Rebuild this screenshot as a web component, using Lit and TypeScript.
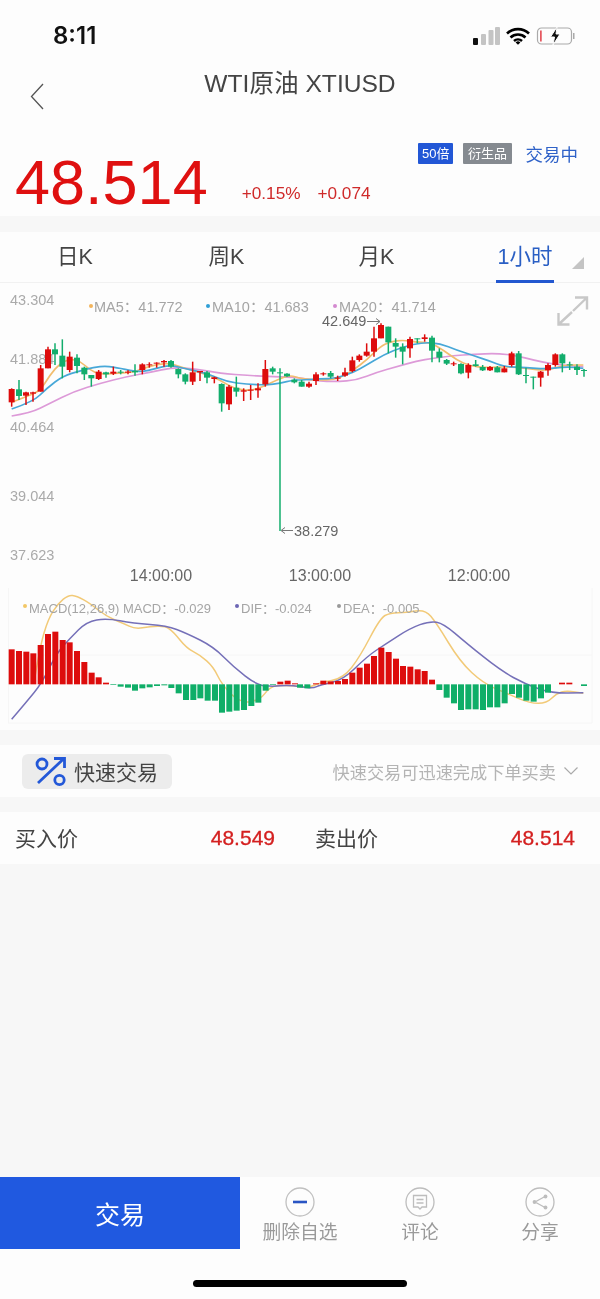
import { LitElement, css, html, svg } from 'lit';
import { customElement } from 'lit/decorators.js';

type Candle = [number, number, number, number, number, 'r' | 'g'];

// all chart data is in 3x units, read off the reference crops
const CANDLES: Candle[] = [
  [35, 310, 365, 312, 352, 'r'], [57, 285, 345, 313, 333, 'g'], [78, 320, 360, 322, 332, 'r'],
  [99, 320, 350, 322, 326, 'r'], [122, 240, 320, 250, 320, 'r'], [144, 185, 250, 193, 250, 'r'],
  [165, 175, 240, 193, 208, 'g'], [187, 163, 280, 212, 245, 'g'], [209, 200, 262, 215, 255, 'r'],
  [231, 208, 265, 218, 243, 'g'], [253, 245, 285, 248, 268, 'g'], [274, 270, 305, 270, 280, 'g'],
  [296, 255, 285, 260, 282, 'r'], [318, 260, 278, 262, 268, 'g'], [340, 245, 270, 260, 266, 'r'],
  [362, 255, 268, 260, 263, 'g'], [384, 256, 268, 260, 263, 'r'], [405, 238, 272, 258, 262, 'g'],
  [427, 235, 268, 238, 255, 'r'], [448, 232, 248, 238, 241, 'r'], [470, 232, 248, 233, 236, 'r'],
  [492, 225, 245, 228, 232, 'r'], [513, 225, 248, 228, 245, 'g'], [535, 250, 280, 252, 268, 'g'],
  [556, 265, 298, 268, 290, 'g'], [578, 230, 300, 262, 290, 'r'], [600, 258, 288, 258, 262, 'r'],
  [621, 258, 295, 262, 278, 'g'], [643, 275, 295, 277, 282, 'r'], [665, 295, 380, 297, 355, 'g'],
  [687, 300, 375, 305, 358, 'r'], [709, 275, 335, 308, 320, 'g'], [731, 310, 348, 316, 320, 'r'],
  [752, 300, 345, 314, 317, 'r'], [774, 295, 338, 310, 316, 'r'], [796, 225, 305, 252, 298, 'r'],
  [818, 245, 268, 250, 260, 'g'], [840, 250, 738, 262, 265, 'g'], [861, 265, 275, 266, 274, 'g'],
  [883, 280, 295, 284, 292, 'g'], [905, 285, 305, 290, 305, 'g'], [927, 290, 308, 296, 305, 'r'],
  [948, 262, 300, 268, 288, 'r'], [970, 262, 272, 265, 268, 'r'], [992, 258, 280, 264, 275, 'g'],
  [1013, 272, 288, 278, 281, 'r'], [1035, 248, 275, 262, 272, 'r'], [1057, 215, 262, 226, 258, 'r'],
  [1078, 208, 230, 212, 225, 'r'], [1100, 175, 215, 200, 212, 'r'], [1122, 125, 215, 160, 200, 'r'],
  [1143, 115, 160, 120, 160, 'r'], [1165, 125, 205, 125, 172, 'g'], [1187, 160, 218, 174, 185, 'g'],
  [1208, 175, 238, 185, 200, 'g'], [1230, 155, 218, 162, 190, 'r'], [1252, 160, 175, 160, 163, 'g'],
  [1274, 148, 170, 157, 162, 'r'], [1296, 152, 232, 158, 197, 'g'], [1318, 190, 232, 200, 218, 'g'],
  [1340, 222, 240, 225, 236, 'g'], [1361, 230, 243, 235, 238, 'r'], [1383, 235, 268, 237, 265, 'g'],
  [1405, 235, 280, 240, 263, 'r'], [1427, 225, 245, 238, 243, 'g'], [1448, 240, 258, 246, 256, 'g'],
  [1470, 243, 258, 246, 256, 'r'], [1492, 243, 262, 247, 262, 'g'], [1513, 243, 262, 250, 262, 'r'],
  [1535, 200, 245, 205, 240, 'r'], [1556, 198, 270, 205, 268, 'g'], [1578, 248, 295, 270, 273, 'g'],
  [1600, 275, 313, 275, 278, 'g'], [1622, 258, 305, 260, 278, 'r'], [1644, 235, 272, 240, 256, 'r'],
  [1666, 205, 245, 208, 240, 'r'], [1687, 205, 262, 208, 235, 'g'], [1709, 230, 255, 238, 241, 'g'],
  [1731, 238, 270, 245, 255, 'g'], [1752, 252, 275, 255, 258, 'g'],
];

const MA5 = [35,352,80,335,120,318,150,270,180,235,210,222,240,228,270,255,300,268,340,265,400,262,430,250,470,238,510,235,540,245,580,258,620,268,660,285,700,310,750,318,790,305,830,285,870,270,900,280,940,285,980,285,1020,280,1060,255,1100,225,1140,185,1170,170,1210,165,1250,172,1290,172,1330,195,1370,225,1410,243,1460,248,1520,245,1580,250,1640,258,1690,240,1750,240];
const MA10 = [35,372,100,350,140,310,190,272,240,258,280,247,320,243,360,250,420,262,470,250,510,240,560,252,620,265,680,290,740,298,800,300,840,295,880,285,900,285,960,282,1010,280,1060,262,1100,240,1150,210,1210,185,1270,172,1320,175,1370,195,1420,212,1470,228,1510,245,1580,248,1640,252,1700,245,1750,250];
const MA20 = [35,393,90,385,150,355,220,320,300,295,380,275,450,262,520,247,590,252,660,265,750,272,820,275,900,278,950,288,1010,290,1070,285,1130,262,1190,245,1250,228,1300,220,1360,212,1420,208,1490,205,1550,212,1600,225,1660,238,1750,245];

const MACD = [105,260,120,170,145,85,175,40,205,15,230,18,270,40,320,80,370,100,405,117,450,110,495,108,520,125,560,175,600,195,640,230,665,283,720,340,780,330,810,290,850,285,900,290,930,292,960,278,1030,265,1080,200,1140,85,1170,68,1220,68,1275,58,1310,100,1380,215,1450,280,1520,310,1590,340,1640,340,1670,310,1700,302,1750,310];
const DIF = [35,388,80,335,125,280,170,190,210,145,260,95,320,85,400,100,500,107,560,130,640,170,700,230,770,285,820,290,860,285,900,290,940,295,960,285,1030,270,1100,200,1160,160,1230,115,1290,93,1330,100,1400,160,1500,240,1580,285,1660,310,1750,308];

// [x, top of bar]; baseline sits at 283
const BARS: [number, number][] = [
  [35,178],[57,183],[79,185],[100,190],[122,165],[144,132],[166,125],[188,150],[209,157],[231,183],[253,216],[275,248],[296,262],[318,278],
  [340,285],[362,290],[384,293],[405,302],[427,295],[449,292],[471,288],[493,286],[514,294],[536,310],[558,330],[580,330],[601,325],[623,332],[645,332],[666,368],[688,365],[710,362],[732,360],[754,348],[775,338],[797,302],[819,285],
  [841,275],[863,272],[885,280],[900,293],[922,295],[948,280],[970,272],[992,274],[1014,273],[1035,267],[1057,248],[1079,233],[1101,221],[1122,198],[1144,173],[1166,186],[1188,206],[1209,228],[1231,230],[1253,238],[1274,243],[1296,269],
  [1318,300],[1340,323],[1362,340],[1383,360],[1405,358],[1427,358],[1449,360],[1470,352],[1492,352],[1514,340],[1536,312],[1557,323],[1579,332],[1601,335],[1623,325],[1644,308],
  [1686,278],[1708,278],[1752,288],
];

const smooth = (p: number[]) => {
  let d = `M${p[0]} ${p[1]}`;
  for (let i = 2; i < p.length - 2; i += 2) {
    d += `Q${p[i]} ${p[i + 1]} ${(p[i] + p[i + 2]) / 2} ${(p[i + 1] + p[i + 3]) / 2}`;
  }
  return d + `L${p[p.length - 2]} ${p[p.length - 1]}`;
};

@customElement('app-root')
export class AppRoot extends LitElement {
  static styles = css`
    :host {
      display: flex;
      flex-direction: column;
      height: 1299px;
      background: #fdfdfd;
      color: #333;
      font-family: "Liberation Sans", "Noto Sans CJK SC", sans-serif;
      filter: blur(0.5px);
    }
    .status { display: flex; justify-content: space-between; align-items: center; height: 70px; padding: 1px 25px 0 53px; box-sizing: border-box; }
    .time { font: 600 24px Inter, sans-serif; color: #111; }
    .status svg { display: block; }
    .header { display: grid; grid-template-columns: 1fr auto 1fr; height: 58px; }
    .header h1 { margin: -1px 0 0; font-size: 24.6px; font-weight: 400; line-height: 30px; color: #444; }
    .back { align-self: end; margin: 0 0 18px 30px; }
    .price { display: flex; justify-content: space-between; height: 88px; padding: 15px 22px 0 15px; box-sizing: border-box; }
    .quote { display: flex; align-items: flex-start; gap: 34px; height: 73px; }
    .last { font-size: 63px; line-height: 73px; color: #df1010; margin-top: 3px; }
    .changes { display: flex; gap: 17px; margin-top: 40px; font-size: 17.2px; color: #cf2a2a; }
    .flags { display: flex; align-items: center; height: 21px; font-size: 13px; color: #fff; }
    .flag { height: 21px; line-height: 21px; padding: 0 4px; border-radius: 1px; background: #2257d6; }
    .flag.grey { background: #858a90; margin-left: 10px; padding: 0 4.5px; }
    .open { margin-left: 14px; font-size: 17.5px; color: #2f62c8; }
    .gap { height: 15px; background: #f7f7f7; flex: none; }
    .gap.first { height: 16px; }
    .tabs { display: flex; height: 51px; position: relative; border-bottom: 1px solid #f1f1f1; box-sizing: border-box; }
    .tab { flex: 0 0 150px; box-sizing: border-box; text-align: center; font-size: 21.5px; line-height: 50px; color: #444; }
    .tab.shift { padding-left: 3px; }
    .tab span { display: inline-block; height: 48px; padding: 0 2px; }
    .tab.on { color: #2a5fc4; }
    .tab.on span { border-bottom: 3px solid #2358d0; }
    .corner { position: absolute; right: 16px; top: 25px; }
    .chart { display: block; flex: none; }
    .axis { font-size: 14.5px; fill: #aaa; }
    .legend { font-size: 14.5px; fill: #a5a5a5; }
    .legend.small { font-size: 13px; }
    .mark { font-size: 14.5px; fill: #666; }
    .time-label { font-size: 16px; fill: #666; text-anchor: middle; }
    .quick { display: flex; justify-content: space-between; align-items: center; height: 52px; padding: 0 22px; flex: none; }
    .pill { display: flex; align-items: center; gap: 8px; height: 35px; width: 150px; box-sizing: border-box; padding: 0 0 0 13px; border-radius: 6px; background: #ececec; font-size: 21px; color: #444; }
    .hint { display: flex; align-items: center; gap: 8px; font-size: 17.2px; color: #b4b4b4; }
    .bids { display: grid; grid-template-columns: 1fr 1fr; height: 52px; flex: none; }
    .bid { display: flex; justify-content: space-between; align-items: center; padding: 0 25px 2px 15px; font-size: 21px; color: #444; }
    .bid b { margin-top: 2px; font-size: 21px; font-weight: 400; color: #d42020; -webkit-text-stroke: 0.3px #d42020; }
    .fill { flex: 1; background: #f7f7f7; }
    .actions { display: grid; grid-template-columns: 240px 1fr 1fr 1fr; height: 72px; flex: none; }
    .trade { background: #2059e0; color: #fff; font-size: 25px; display: flex; align-items: center; justify-content: center; }
    .action { display: flex; flex-direction: column; align-items: center; padding-top: 10px; font-size: 18.8px; line-height: 26px; color: #9a9a9a; gap: 3px; }
    .home { height: 50px; display: flex; justify-content: center; padding-top: 31px; box-sizing: border-box; flex: none; }
    .home i { display: block; width: 214px; height: 7px; border-radius: 4px; background: #000; }
  `;

  renderPlot() {
    const candles = CANDLES.map(([x, wt, wb, bt, bb, c]) => {
      const col = c === 'r' ? '#dd0c0c' : '#12ad6c';
      return svg`<path d="M${x} ${wt}V${wb}" stroke=${col} stroke-width="4.5"/><rect x=${x - 9} y=${bt} width="18" height=${bb - bt} fill=${col}/>`;
    });
    const bars = BARS.map(([x, top]) => {
      const up = top < 283;
      return svg`<rect x=${x - 9} y=${up ? top : 283} width="18" height=${Math.abs(top - 283)} fill=${up ? '#dd0c0c' : '#0fae68'}/>`;
    });
    return svg`
      <g transform="translate(0,2) scale(.33333)" fill="none">
        <g stroke-width="5">
          <path d=${smooth(MA20)} stroke="#dd9ad8"/>
          <path d=${smooth(MA5)} stroke="#f2bd6e"/>
          <path d=${smooth(MA10)} stroke="#48a8d8"/>
        </g>
        ${candles}
      </g>
      <path d="M8.5 305V440M8 372H592M592 305V440M8 440H592" stroke="#f6f6f6" fill="none"/>
      <g transform="translate(0,307) scale(.33333)" fill="none">
        <g stroke-width="4.5">
          <path d=${smooth(MACD)} stroke="#f2ca78"/>
          <path d=${smooth(DIF)} stroke="#7570b8"/>
        </g>
        ${bars}
      </g>`;
  }

  render() {
    return html`
      <div class="status">
        <span class="time">8:11</span>
        <svg width="102" height="18" viewBox="0 0 102 18">
          <rect x="0" y="11" width="5" height="7" rx="1" fill="#111"/>
          <rect x="8" y="7" width="5" height="11" rx="1" fill="#c4c4c4"/>
          <rect x="15.5" y="3" width="5" height="15" rx="1" fill="#c4c4c4"/>
          <rect x="22" y="0" width="5" height="18" rx="1" fill="#c4c4c4"/>
          <path d="M34 6.5a16 16 0 0 1 22 0M37.5 10.5a11 11 0 0 1 15 0M41 14a6 6 0 0 1 8 0" fill="none" stroke="#000" stroke-width="2.6"/>
          <path d="M42.6 15.4L45 17.8l2.4-2.4a3.5 3.5 0 0 0-4.8 0z" fill="#000"/>
          <rect x="64.5" y="1" width="34" height="16" rx="4" fill="none" stroke="#aaa" stroke-width="1.2"/>
          <rect x="100" y="6" width="1.5" height="6" fill="#aaa"/>
          <rect x="67.2" y="3.5" width="1.4" height="11" fill="#e0303a"/>
          <path d="M84 0L77.5 10h4L80 18l7-11h-4z" fill="#111" stroke="#fdfdfd" stroke-width="1"/>
        </svg>
      </div>

      <div class="header">
        <svg class="back" width="14" height="27" viewBox="0 0 14 27"><path d="M13 1L1.5 13.5 13 26" fill="none" stroke="#555" stroke-width="1.3"/></svg>
        <h1>WTI原油 XTIUSD</h1>
      </div>

      <div class="price">
        <div class="quote">
          <span class="last">48.514</span>
          <div class="changes"><span>+0.15%</span><span>+0.074</span></div>
        </div>
        <div class="flags">
          <span class="flag">50倍</span>
          <span class="flag grey">衍生品</span>
          <span class="open">交易中</span>
        </div>
      </div>

      <div class="gap first"></div>

      <div class="tabs">
        <div class="tab"><span>日K</span></div>
        <div class="tab shift"><span>周K</span></div>
        <div class="tab shift"><span>月K</span></div>
        <div class="tab on"><span>1小时</span></div>
        <svg class="corner" width="12" height="12" viewBox="0 0 12 12"><path d="M12 0V12H0z" fill="#c4c4c4"/></svg>
      </div>

      <svg class="chart" width="600" height="447" viewBox="0 0 600 447">
        <text class="axis" x="10" y="22">43.304</text>
        <text class="axis" x="10" y="81">41.884</text>
        <text class="axis" x="10" y="149">40.464</text>
        <text class="axis" x="10" y="218">39.044</text>
        <text class="axis" x="10" y="277">37.623</text>

        ${this.renderPlot()}

        <circle cx="91" cy="23" r="2" fill="#f2b45c"/>
        <text class="legend" x="94" y="29">MA5：41.772</text>
        <circle cx="208" cy="23" r="2" fill="#2f9fd6"/>
        <text class="legend" x="212" y="29">MA10：41.683</text>
        <circle cx="335" cy="23" r="2" fill="#d48ad0"/>
        <text class="legend" x="339" y="29">MA20：41.714</text>

        <text class="mark" x="322" y="43">42.649</text>
        <path d="M367 38.5H380M376 35.5L380 38.5 376 41.5" fill="none" stroke="#777"/>
        <path d="M282 247.5H293M285 244.5L281 247.5 285 250.5" fill="none" stroke="#777"/>
        <text class="mark" x="294" y="253">38.279</text>

        <g fill="none" stroke="#c8c8c8" stroke-width="2.4">
          <path d="M575 14.5H587V26.5M587 14.5L573 28M569.5 41.5H558.5V30M558.5 41.5L572 29"/>
        </g>

        <text class="time-label" x="161" y="298">14:00:00</text>
        <text class="time-label" x="320" y="298">13:00:00</text>
        <text class="time-label" x="479" y="298">12:00:00</text>

        <circle cx="25" cy="323" r="2" fill="#f2c766"/>
        <text class="legend small" x="29" y="330">MACD(12,26,9) MACD：-0.029</text>
        <circle cx="237" cy="323" r="2" fill="#6c66b4"/>
        <text class="legend small" x="241" y="330">DIF：-0.024</text>
        <circle cx="339" cy="323" r="2" fill="#999"/>
        <text class="legend small" x="343" y="330">DEA：-0.005</text>
      </svg>

      <div class="gap"></div>

      <div class="quick">
        <div class="pill">
          <svg width="31" height="31" viewBox="0 0 31 31" fill="none" stroke="#2358d8" stroke-width="2.8">
            <circle cx="7" cy="8" r="5"/>
            <circle cx="24.5" cy="24" r="4.7"/>
            <path d="M3 27L29.5 2M19 2.5H29.5V12"/>
          </svg>
          快速交易
        </div>
        <div class="hint">
          快速交易可迅速完成下单买卖
          <svg width="14" height="8" viewBox="0 0 14 8"><path d="M.5.5L7 7 13.5.5" fill="none" stroke="#aaa" stroke-width="1.2"/></svg>
        </div>
      </div>

      <div class="gap"></div>

      <div class="bids">
        <div class="bid">买入价<b>48.549</b></div>
        <div class="bid">卖出价<b>48.514</b></div>
      </div>

      <div class="fill"></div>

      <div class="actions">
        <div class="trade">交易</div>
        <div class="action">
          <svg width="30" height="30" viewBox="0 0 30 30"><circle cx="15" cy="15" r="14" fill="none" stroke="#c0c0c0" stroke-width="1.3"/><path d="M8 15H22" stroke="#2a55c4" stroke-width="2.6"/></svg>
          删除自选
        </div>
        <div class="action">
          <svg width="30" height="30" viewBox="0 0 30 30" fill="none" stroke="#bdbdbd"><circle cx="15" cy="15" r="14" stroke-width="1.3"/><path d="M8.5 8.5H21.5V20H17L15 22 13 20H8.5zM11.5 12.5H18.5M11.5 16H18.5" stroke-width="1.3"/></svg>
          评论
        </div>
        <div class="action">
          <svg width="30" height="30" viewBox="0 0 30 30" fill="none" stroke="#bdbdbd"><circle cx="15" cy="15" r="14" stroke-width="1.3"/><path d="M20 9.5L10 15 20 20.5" stroke-width="1.3"/><g fill="#bdbdbd" stroke="none"><circle cx="20.5" cy="9.5" r="1.9"/><circle cx="9.5" cy="15" r="1.9"/><circle cx="20.5" cy="20.5" r="1.9"/></g></svg>
          分享
        </div>
      </div>

      <div class="home"><i></i></div>
    `;
  }
}

declare global {
  interface HTMLElementTagNameMap {
    'app-root': AppRoot;
  }
}
